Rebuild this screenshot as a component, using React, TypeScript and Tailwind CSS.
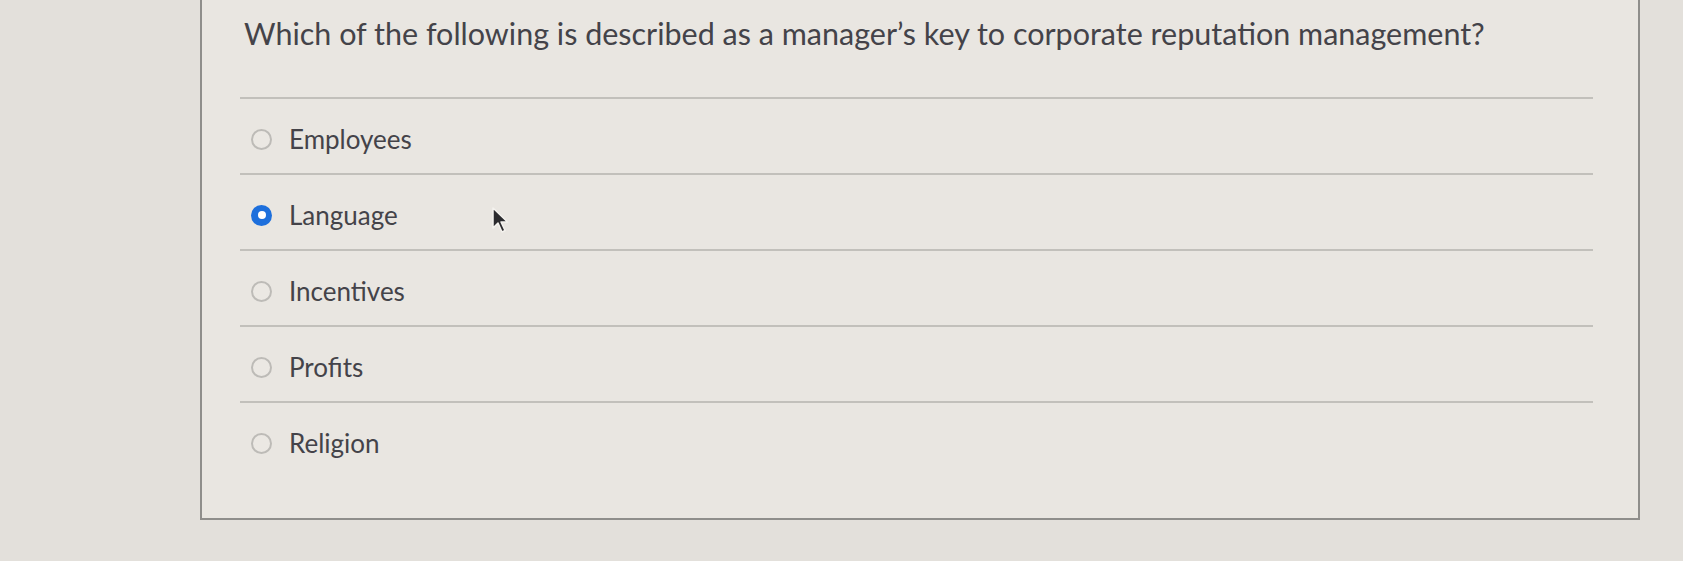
import React from 'react';

const options = ['Employees', 'Language', 'Incentives', 'Profits', 'Religion'];

const Radio = ({ checked }: { checked: boolean }) =>
    checked ? (
        <span className="w-[21px] h-[21px] rounded-full bg-[#1d6fdc] flex items-center justify-center shrink-0">
            <span className="w-[8px] h-[8px] rounded-full bg-white"></span>
        </span>
    ) : (
        <span className="w-[21px] h-[21px] rounded-full border-2 border-[#bdbbb7] bg-[#ebe8e3] shrink-0"></span>
    );

export default function App() {
    return (
        <div className="w-full h-[561px] bg-[#e3e0db] overflow-hidden relative" style={{ fontFamily: 'Lato, "Open Sans", sans-serif' }}>
            {/* Question card (top edge scrolled out of view) */}
            <div className="ml-[200px] w-[1440px] h-[520px] border-x-2 border-b-2 border-[#8f8e8b] bg-[#e9e6e1] pl-[38px] pr-[45px]">
                <h2 className="pt-[14px] pl-[4px] text-[30.5px] leading-[38px] text-[#444349] font-normal">
                    Which of the following is described as a manager’s key to corporate reputation management?
                </h2>

                <div className="mt-[45px]">
                    {options.map((opt, i) => (
                        <div
                            key={opt}
                            className="h-[76px] flex items-center pt-[6px] pl-[11px] gap-[17px] border-t-2 border-[#c2c0bb]"
                        >
                            <Radio checked={i === 1} />
                            <span className="text-[26px] leading-[32px] text-[#444349]">{opt}</span>
                        </div>
                    ))}
                </div>
            </div>

            {/* Mouse pointer */}
            <svg className="absolute left-[491px] top-[206px]" width="18" height="28" viewBox="0 0 18 28">
                <path d="M2 2 L2 22 L7 17 L11 26 L14 24.5 L10 16 L16.5 16 Z" fill="#2b2b2e" stroke="#f4f2ee" strokeWidth="1.5" strokeLinejoin="round" />
            </svg>
        </div>
    );
}
